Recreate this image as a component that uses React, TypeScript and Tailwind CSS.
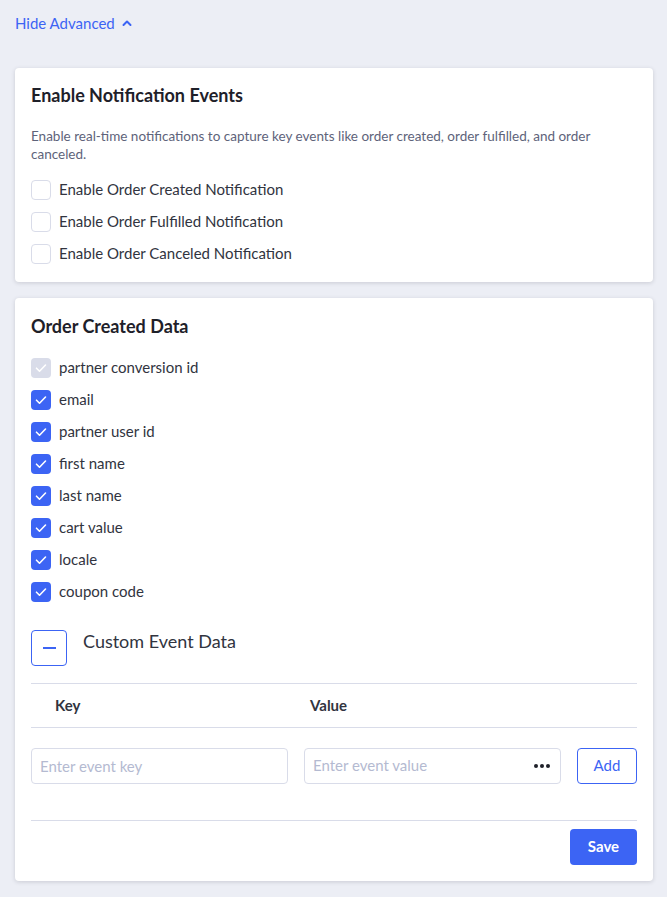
import React from 'react';

const fields = [
  { label: 'partner conversion id', disabled: true },
  { label: 'email' },
  { label: 'partner user id' },
  { label: 'first name' },
  { label: 'last name' },
  { label: 'cart value' },
  { label: 'locale' },
  { label: 'coupon code' },
];

const events = [
  'Enable Order Created Notification',
  'Enable Order Fulfilled Notification',
  'Enable Order Canceled Notification',
];

const Check = ({ checked, disabled }: { checked?: boolean; disabled?: boolean }) => {
  if (!checked) {
    return <span className="h-5 w-5 shrink-0 rounded-[4px] border border-[#d9dce9] bg-white" />;
  }
  return (
    <span
      className={`flex h-5 w-5 shrink-0 items-center justify-center rounded-[4px] ${
        disabled ? 'bg-[#d9dce9]' : 'bg-[#3c64f4]'
      }`}
    >
      <svg width="14" height="14" viewBox="0 0 14 14" fill="none">
        <path d="M2.5 7.2l3 3 6-6.2" stroke="white" strokeWidth="1.6" strokeLinecap="round" strokeLinejoin="round" />
      </svg>
    </span>
  );
};

const App = () => {
  return (
    <div
      className="min-h-[897px] bg-[#eceef5] px-[15px] pt-3 pb-4 text-[#313440]"
      style={{ fontFamily: 'Lato, "Noto Sans", sans-serif' }}
    >
      <button className="flex items-center gap-1.5 text-[15px] text-[#3c64f4]">
        Hide Advanced
        <svg width="12" height="12" viewBox="0 0 12 12" fill="none">
          <path d="M2.5 8l3.5-3.5L9.5 8" stroke="#3c64f4" strokeWidth="2" strokeLinecap="round" strokeLinejoin="round" />
        </svg>
      </button>

      <div className="mt-[33px] mr-[-1px] rounded-[4px] bg-white px-4 pt-[15px] pb-[12px] shadow-[0_1px_4px_rgba(49,52,64,0.18)]">
        <h2 className="text-[18px] font-bold leading-6 text-[#1e2029]">Enable Notification Events</h2>
        <p className="mt-[20px] text-[13.5px] leading-[18px] text-[#5e637a]">
          Enable real-time notifications to capture key events like order created, order fulfilled, and order
          canceled.
        </p>
        <div className="mt-[11px] flex flex-col">
          {events.map((e) => (
            <label key={e} className="flex h-8 items-center gap-2 text-[15px]">
              <Check />
              {e}
            </label>
          ))}
        </div>
      </div>

      <div className="mt-4 mr-[-1px] rounded-[4px] bg-white px-4 pt-[16px] pb-4 shadow-[0_1px_4px_rgba(49,52,64,0.18)]">
        <h2 className="text-[18px] font-bold leading-6 text-[#1e2029]">Order Created Data</h2>
        <div className="mt-[14px] flex flex-col">
          {fields.map((f) => (
            <label key={f.label} className="flex h-8 items-center gap-2 text-[15px]">
              <Check checked disabled={f.disabled} />
              {f.label}
            </label>
          ))}
        </div>

        <div className="mt-[22px] flex items-start gap-4">
          <button className="flex h-9 w-9 items-center justify-center rounded-[4px] border border-[#3c64f4]">
            <span className="h-[2px] w-[13px] bg-[#3c64f4]" />
          </button>
          <span className="mt-[-1px] text-[18px] leading-6">Custom Event Data</span>
        </div>

        <div className="mt-[17px] grid grid-cols-[273px_1fr] border-t border-b border-[#d9dce9] text-[15px] font-bold">
          <div className="flex h-[43px] items-center pl-6">Key</div>
          <div className="flex h-[43px] items-center pl-[6px]">Value</div>
        </div>

        <div className="mt-5 flex items-center gap-4">
          <input
            placeholder="Enter event key"
            className="h-9 w-[257px] rounded-[4px] border border-[#d9dce9] px-2 text-[15px] placeholder:text-[#b4bad1] outline-none"
          />
          <div className="flex h-9 w-[257px] items-center rounded-[4px] border border-[#d9dce9] px-2">
            <input
              placeholder="Enter event value"
              className="min-w-0 flex-1 text-[15px] placeholder:text-[#b4bad1] outline-none"
            />
            <svg width="18" height="6" viewBox="0 0 18 6" className="mr-[1px]">
              <circle cx="3" cy="3" r="2" fill="#1e2029" />
              <circle cx="9" cy="3" r="2" fill="#1e2029" />
              <circle cx="15" cy="3" r="2" fill="#1e2029" />
            </svg>
          </div>
          <button className="h-9 w-[60px] rounded-[4px] border border-[#3c64f4] text-[15px] text-[#3c64f4]">
            Add
          </button>
        </div>

        <div className="mt-9 flex justify-end border-t border-[#d9dce9] pt-2">
          <button className="h-9 w-[67px] rounded-[4px] bg-[#3c64f4] text-[15px] font-bold text-white">Save</button>
        </div>
      </div>
    </div>
  );
};

export default App;
